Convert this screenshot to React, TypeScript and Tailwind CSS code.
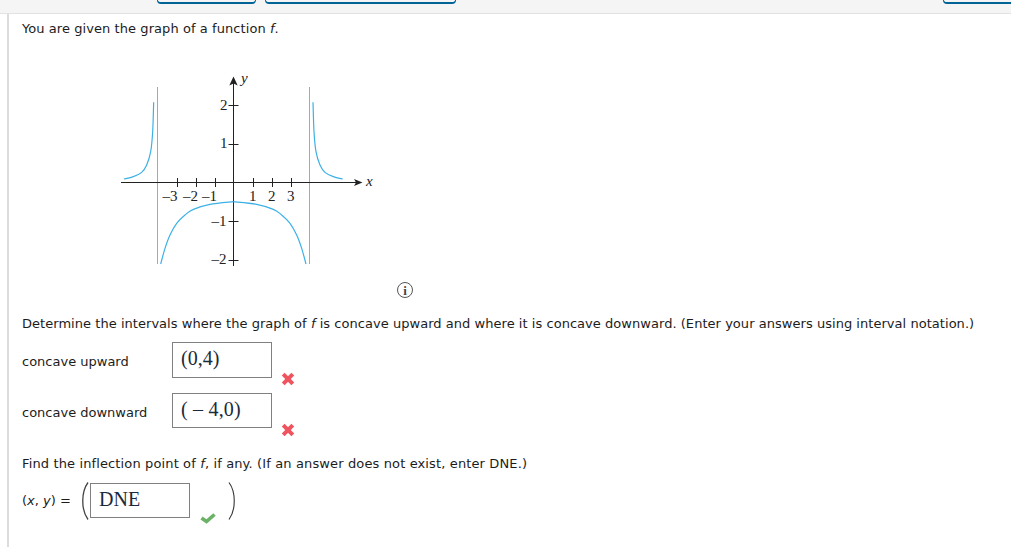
const sans = "font-['DejaVu_Sans',Verdana,sans-serif]";

type P = [number, number];

function smooth(zoomPoints: P[]) {
  const p = zoomPoints.map(([x, y]): P => [x / 3, y / 3]);
  let d = `M${p[0][0].toFixed(2)} ${p[0][1].toFixed(2)}`;
  for (let i = 0; i < p.length - 1; i++) {
    const a = p[Math.max(i - 1, 0)];
    const b = p[i];
    const c = p[i + 1];
    const e = p[Math.min(i + 2, p.length - 1)];
    const c1: P = [b[0] + (c[0] - a[0]) / 6, b[1] + (c[1] - a[1]) / 6];
    const c2: P = [c[0] - (e[0] - b[0]) / 6, c[1] - (e[1] - b[1]) / 6];
    d += ` C${c1[0].toFixed(2)} ${c1[1].toFixed(2)} ${c2[0].toFixed(2)} ${c2[1].toFixed(2)} ${c[0].toFixed(2)} ${c[1].toFixed(2)}`;
  }
  return d;
}

const upperLeft: P[] = [[131, 112], [128, 200], [122, 260], [110, 300], [95, 322], [70, 335], [42, 342]];
const lowerLeft: P[] = [[152, 597], [165, 550], [180, 510], [200, 475], [225, 450], [250, 433], [300, 418], [370, 410]];
const mirror = (pts: P[]): P[] => pts.map(([x, y]): P => [740 - x, y]);

function Graph() {
  const ticksX = [-3, -2, -1, 1, 2, 3];
  const ticksY = [-2, -1, 1, 2];
  const ox = 123.5;
  const oy = 117.5;
  const ux = 19;
  const uy = 38.6;
  return (
    <svg width="270" height="210" viewBox="0 0 270 210" className="block">
      <line x1="47.5" y1="22" x2="47.5" y2="199" stroke="#a8a8a8" strokeWidth="1" />
      <line x1="199.5" y1="22" x2="199.5" y2="199" stroke="#a8a8a8" strokeWidth="1" />
      <line x1="11" y1={oy} x2="246" y2={oy} stroke="#222" strokeWidth="1" />
      <line x1={ox} y1="16" x2={ox} y2="201" stroke="#222" strokeWidth="1" />
      <path d="M123.5 11.5 L119.3 20.5 L123.5 18.5 L127.7 20.5 Z" fill="#222" />
      <path d="M252.5 117.5 L244 114 L246 117.5 L244 121 Z" fill="#222" />
      {ticksX.map((t) => (
        <line key={t} x1={Math.round(ox + t * ux) + 0.5} y1={oy - 4.5} x2={Math.round(ox + t * ux) + 0.5} y2={oy + 4.5} stroke="#222" strokeWidth="1" />
      ))}
      {ticksY.map((t) => (
        <line key={t} x1={ox - 5} y1={Math.round(oy - t * uy) + 0.5} x2={ox + 5} y2={Math.round(oy - t * uy) + 0.5} stroke="#222" strokeWidth="1" />
      ))}
      <g fill="none" stroke="#3db1e6" strokeWidth="1.2">
        <path d={smooth(upperLeft)} />
        <path d={smooth(mirror(upperLeft))} />
        <path d={smooth(lowerLeft)} />
        <path d={smooth(mirror(lowerLeft))} />
      </g>
      <g fontFamily="'Liberation Serif', serif" fontSize="15" fill="#222">
        <text x="52.5" y="135.5">–3</text>
        <text x="73" y="135.5">–2</text>
        <text x="92" y="135.5">–1</text>
        <text x="139" y="135.5">1</text>
        <text x="158" y="135.5">2</text>
        <text x="177" y="135.5">3</text>
        <text x="110" y="45">2</text>
        <text x="110" y="83">1</text>
        <text x="101.5" y="160.5">–1</text>
        <text x="101.5" y="199">–2</text>
        <text x="131" y="18" fontSize="15" fontStyle="italic">y</text>
        <text x="256" y="121" fontSize="15" fontStyle="italic">x</text>
      </g>
    </svg>
  );
}

function Cross() {
  return (
    <svg width="14" height="14" viewBox="0 0 14 14" className="block">
      <path d="M2.2 2.2 L11.8 11.8 M11.8 2.2 L2.2 11.8" stroke="#f0545e" strokeWidth="4" fill="none" />
    </svg>
  );
}

function Check() {
  return (
    <svg width="16" height="12" viewBox="0 0 16 12" className="block">
      <path d="M1.5 6 L6.5 9.5 L14.5 2.5" stroke="#6cb266" strokeWidth="3.6" fill="none" />
    </svg>
  );
}

function Answer({ value, h, extra = "" }: { value: string; h: string; extra?: string }) {
  return (
    <div className={`w-[100px] shrink-0 ${h} ${extra} border border-[#808080] pl-2 font-['Liberation_Serif',serif] text-[20px] leading-[30px] text-[#1a2a3a]`}>
      {value}
    </div>
  );
}

export default function App() {
  return (
    <div className={`w-[1011px] h-[547px] overflow-hidden bg-white ${sans} text-[13px] leading-[16px] text-[#1c1c1c]`}>
      <header className="flex h-[14px] border-b border-[#e2e2e2] bg-[#f5f5f5]">
        <div className="ml-[157px] h-[4px] w-[99px] shrink-0 rounded-b-[4px] border-x border-b-2 border-[#006497]" />
        <div className="ml-[9px] h-[4px] w-[191px] shrink-0 rounded-b-[4px] border-x border-b-2 border-[#006497]" />
        <div className="ml-[487px] h-[4px] w-[68px] shrink-0 rounded-bl-[4px] border-l border-b-2 border-[#006497]" />
      </header>
      <main className="ml-[7px] h-[533px] border-l-2 border-[#dcdcdc] pl-[13px]">
        <p className="pt-[7px] tracking-[0.07px]">
          You are given the graph of a function <i>f</i>.
        </p>
        <div className="ml-[88px] mt-[28px]">
          <Graph />
        </div>
        <div className="ml-[375px] mt-[7px] flex h-[16px] w-[16px] items-center justify-center rounded-full border-[1.5px] border-[#555] font-['Liberation_Serif',serif] text-[13px] font-bold leading-none text-[#444]">
          i
        </div>
        <p className="mt-[18px] tracking-[0.04px]">
          Determine the intervals where the graph of <i>f</i> is concave upward and where it is concave downward. (Enter your answers using interval notation.)
        </p>
        <div className="mt-[10px] flex h-[36px]">
          <div className="w-[150px] pt-[12px]">concave upward</div>
          <Answer value="(0,4)" h="h-[36px]" />
          <div className="ml-[9px] mt-[30px]"><Cross /></div>
        </div>
        <div className="mt-[15px] flex h-[35px]">
          <div className="w-[150px] pt-[12px]">concave downward</div>
          <Answer value="( – 4,0)" h="h-[35px]" extra="tracking-[0.2px]" />
          <div className="ml-[9px] mt-[30px]"><Cross /></div>
        </div>
        <p className="mt-[28px] tracking-[0.13px]">
          Find the inflection point of <i>f</i>, if any. (If an answer does not exist, enter DNE.)
        </p>
        <div className="mt-[10px] flex h-[44px] items-start">
          <div className="w-[58px] shrink-0 pt-[11px]">
            (<i>x</i>, <i>y</i>) =
          </div>
          <svg width="9" height="38" viewBox="0 0 9 38" className="shrink-0">
            <path d="M8 0.5 C1 10 1 28 8 37.5" fill="none" stroke="#444" strokeWidth="1.3" />
          </svg>
          <div className="ml-[1px] mt-[1px]">
            <Answer value="DNE" h="h-[35px]" />
          </div>
          <div className="ml-[10px] mt-[30px]"><Check /></div>
          <svg width="9" height="38" viewBox="0 0 9 38" className="ml-[12px] shrink-0">
            <path d="M1 0.5 C8 10 8 28 1 37.5" fill="none" stroke="#333" strokeWidth="1.1" />
          </svg>
        </div>
      </main>
    </div>
  );
}
